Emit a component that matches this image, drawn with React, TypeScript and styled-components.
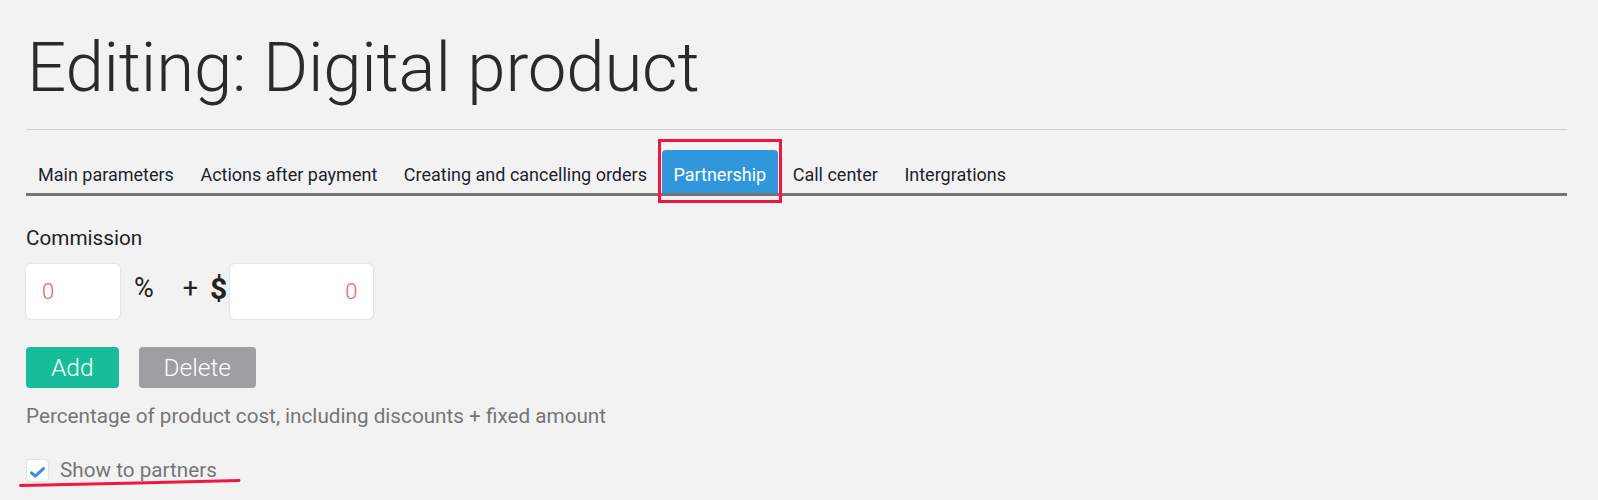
import React from "react"
import styled, { createGlobalStyle } from "styled-components"

const RED = "#f2153f"

const tabs = [
  "Main parameters",
  "Actions after payment",
  "Creating and cancelling orders",
  "Partnership",
  "Call center",
  "Intergrations",
]

const App = () => {
  return (
    <>
      <GlobalStyle />
      <Page>
        <Title>Editing: Digital product</Title>
        <Rule />
        <TabBar>
          {tabs.map((t) => (
            <Tab key={t} $active={t === "Partnership"}>
              {t}
              {t === "Partnership" && <Highlight />}
            </Tab>
          ))}
        </TabBar>

        <Label>Commission</Label>
        <CommissionRow>
          <NumberInput $width={94} $align="left" defaultValue="0" />
          <Sign $gap={14}>%</Sign>
          <Sign $gap={29}>+</Sign>
          <Dollar>$</Dollar>
          <NumberInput $width={143} $align="right" defaultValue="0" />
        </CommissionRow>

        <ButtonRow>
          <Button $color="#17bd9a">Add</Button>
          <Button $color="#9e9ea3">Delete</Button>
        </ButtonRow>

        <Hint>Percentage of product cost, including discounts + fixed amount</Hint>

        <CheckRow>
          <CheckBox>
            <svg width="15" height="11" viewBox="0 0 15 11">
              <path
                d="M1.5 5.8 L5.2 9.2 L13.5 1.6"
                fill="none"
                stroke="#3a8fd9"
                strokeWidth="3"
                strokeLinecap="round"
                strokeLinejoin="round"
              />
            </svg>
          </CheckBox>
          <CheckLabel>Show to partners</CheckLabel>
          <Underline width="222" height="10" viewBox="0 0 222 10">
            <path
              d="M1.5 7.5 C 70 6.5, 150 4, 220 2.5"
              fill="none"
              stroke={RED}
              strokeWidth="3"
              strokeLinecap="round"
            />
          </Underline>
        </CheckRow>
      </Page>
    </>
  )
}

const GlobalStyle = createGlobalStyle`
  html, body {
    margin: 0;
    padding: 0;
    background: #f2f2f2;
    min-height: 100%;
  }
  body {
    font-family: Roboto, "Liberation Sans", Arial, sans-serif;
    color: #222;
  }
`

const Page = styled.div`
  padding: 27px 31px 0 26px;
  min-height: 500px;
  box-sizing: border-box;
`

const Title = styled.h1`
  margin: 0 0 20px 1px;
  font-size: 69px;
  line-height: 82px;
  font-weight: 300;
  color: #2a2a2a;
  letter-spacing: -0.2px;
`

const Rule = styled.div`
  height: 1px;
  background: #cfcfcf;
`

const TabBar = styled.div`
  margin-top: 20px;
  display: flex;
  align-items: stretch;
  gap: 4px;
  border-bottom: 3px solid #747474;
  padding-left: 1px;
`

const Tab = styled.div<{ $active?: boolean }>`
  position: relative;
  height: 43px;
  box-sizing: border-box;
  padding: 5px 11.5px 0 11px;
  display: flex;
  align-items: center;
  font-size: 18px;
  color: ${(p) => (p.$active ? "#fff" : "#1d1f2b")};
  background: ${(p) => (p.$active ? "#3097dc" : "transparent")};
  border-radius: 4px 4px 0 0;
`

const Highlight = styled.span`
  position: absolute;
  left: -4px;
  right: -4px;
  top: -11px;
  bottom: -10px;
  border: 3px solid ${RED};
  pointer-events: none;
`

const Label = styled.div`
  margin-top: 30px;
  font-size: 20.7px;
  line-height: 24px;
  color: #222;
`

const CommissionRow = styled.div`
  margin-top: 14px;
  display: flex;
  align-items: center;
`

const NumberInput = styled.input<{ $width: number; $align: string }>`
  width: ${(p) => p.$width}px;
  height: 55px;
  box-sizing: border-box;
  padding: 0 16px;
  border: none;
  border-radius: 5px;
  background: #fff;
  box-shadow: 0 0 2px rgba(0, 0, 0, 0.18);
  font-family: Roboto, sans-serif;
  font-size: 22px;
  font-weight: 300;
  color: #ef5a6c;
  text-align: ${(p) => p.$align};
  outline: none;
`

const Sign = styled.span<{ $gap: number }>`
  margin-left: ${(p) => p.$gap}px;
  font-size: 27px;
  margin-top: -8px;
  color: #222;
`

const Dollar = styled.span`
  margin-left: 12px;
  margin-right: 3px;
  font-size: 30px;
  font-weight: 700;
  margin-top: -6px;
  color: #222;
`

const ButtonRow = styled.div`
  margin-top: 28px;
  display: flex;
  gap: 20px;
`

const Button = styled.button<{ $color: string }>`
  height: 41px;
  padding: 0 25px;
  border: none;
  border-radius: 4px;
  background: ${(p) => p.$color};
  color: #fff;
  font-family: Roboto, sans-serif;
  font-size: 24.5px;
  font-weight: 300;
  cursor: pointer;
`

const Hint = styled.div`
  margin-top: 16px;
  font-size: 20.7px;
  line-height: 24px;
  color: #767676;
`

const CheckRow = styled.div`
  position: relative;
  margin-top: 30px;
  display: flex;
  align-items: center;
  gap: 12px;
  padding-left: 1px;
`

const CheckBox = styled.span`
  width: 21px;
  height: 21px;
  box-sizing: border-box;
  border-radius: 3px;
  background: #fff;
  box-shadow: 0 0 2px rgba(0, 0, 0, 0.2);
  display: flex;
  align-items: flex-end;
  justify-content: center;
  padding-bottom: 3px;
`

const CheckLabel = styled.span`
  font-size: 20.7px;
  line-height: 24px;
  color: #767676;
`

const Underline = styled.svg`
  position: absolute;
  left: -7px;
  top: 20px;
`

export default App
